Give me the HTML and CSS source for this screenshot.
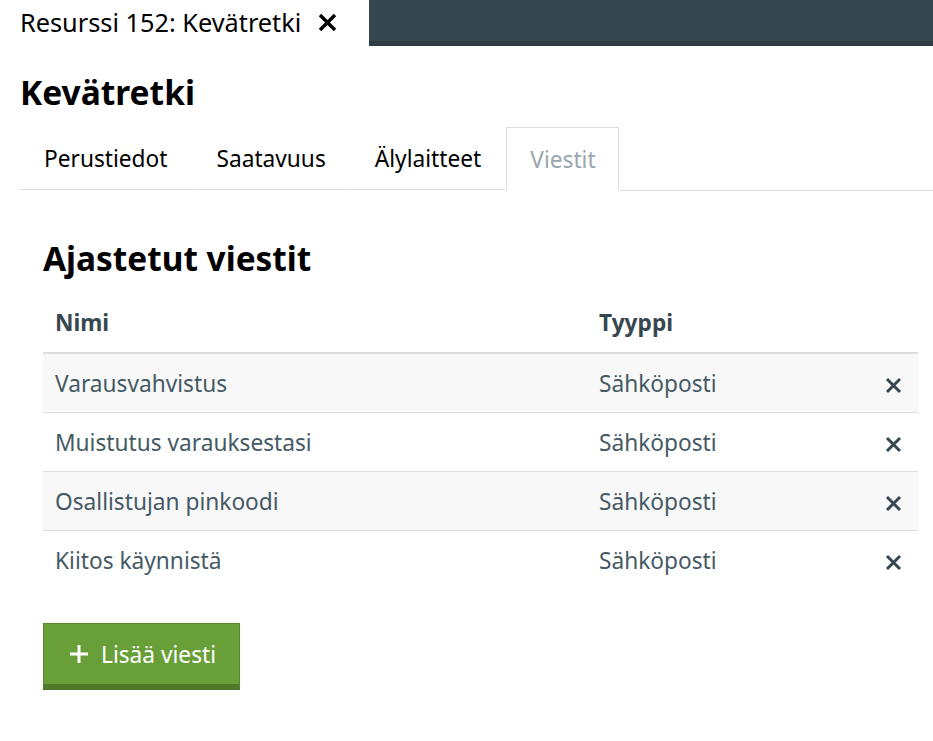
FILE: index.html
```html
<!DOCTYPE html>
<html lang="fi">
<head>
    <meta charset="UTF-8">
    <title>Resurssi 152: Kevätretki</title>
    <link rel="stylesheet" href="styles.css">
</head>
<body>
<header class="topbar">
    <div class="doc-tab">
        <span>Resurssi 152: Kevätretki</span>
        <svg class="doc-close" width="19" height="19" viewBox="0 0 19 19">
            <path d="M2 2 L17 17 M17 2 L2 17" stroke="#000" stroke-width="3.4"/>
        </svg>
    </div>
    <div class="topbar-fill"></div>
</header>
<main class="page">
    <h1 class="page-title">Kevätretki</h1>
    <ul class="tabs">
        <li class="tab">Perustiedot</li>
        <li class="tab">Saatavuus</li>
        <li class="tab">Älylaitteet</li>
        <li class="tab active">Viestit</li>
        <li class="tab-rest"></li>
    </ul>
    <section class="panel">
        <h2>Ajastetut viestit</h2>
        <table class="messages">
            <thead>
            <tr>
                <th class="col-name">Nimi</th>
                <th>Tyyppi</th>
                <th class="col-action"></th>
            </tr>
            </thead>
            <tbody>
            <tr>
                <td>Varausvahvistus</td>
                <td>Sähköposti</td>
                <td class="col-action"><svg class="remove" width="17" height="17" viewBox="0 0 17 17"><path d="M2 2 L15 15 M15 2 L2 15"/></svg></td>
            </tr>
            <tr>
                <td>Muistutus varauksestasi</td>
                <td>Sähköposti</td>
                <td class="col-action"><svg class="remove" width="17" height="17" viewBox="0 0 17 17"><path d="M2 2 L15 15 M15 2 L2 15"/></svg></td>
            </tr>
            <tr>
                <td>Osallistujan pinkoodi</td>
                <td>Sähköposti</td>
                <td class="col-action"><svg class="remove" width="17" height="17" viewBox="0 0 17 17"><path d="M2 2 L15 15 M15 2 L2 15"/></svg></td>
            </tr>
            <tr>
                <td>Kiitos käynnistä</td>
                <td>Sähköposti</td>
                <td class="col-action"><svg class="remove" width="17" height="17" viewBox="0 0 17 17"><path d="M2 2 L15 15 M15 2 L2 15"/></svg></td>
            </tr>
            </tbody>
        </table>
        <button class="add-btn">
            <svg class="plus" width="20" height="20" viewBox="0 0 20 20">
                <path d="M10 1 V19 M1 10 H19" stroke="#fff" stroke-width="3"/>
            </svg>
            Lisää viesti
        </button>
    </section>
</main>
</body>
</html>
```

FILE: styles.css
```css
/* General */
body {
    margin: 0;
    font-family: "Noto Sans", "Open Sans", sans-serif;
    color: #000;
    background: #fff;
}

/* Top document tab bar */
.topbar {
    display: flex;
    height: 46px;
}

.doc-tab {
    display: flex;
    align-items: center;
    gap: 17px;
    width: 369px;
    box-sizing: border-box;
    padding: 0 0 2px 20px;
    font-size: 25.3px;
}

.topbar-fill {
    flex: 1;
    background: #37474f;
    border-bottom: 5px solid #2f3c43;
}

/* Page */
.page {
    padding: 0 0 0 20px;
}

.page-title {
    margin: 28px 0 17px;
    font-size: 33.5px;
    font-weight: 700;
    line-height: 36px;
}

/* Tabs */
.tabs {
    display: flex;
    list-style: none;
    margin: 0;
    padding: 0;
}

.tab {
    padding: 0 24px;
    height: 62px;
    line-height: 64px;
    font-size: 22.7px;
    border-bottom: 1px solid #dedede;
    margin-right: 1px;
}

.tab.active {
    color: #9aa6ae;
    border: 1px solid #dedede;
    border-bottom: none;
    height: 63px;
    padding: 0 22px 0 23px;
}

.tab-rest {
    flex: 1;
    border-bottom: 1px solid #dedede;
}

/* Panel */
.panel {
    padding: 47px 15px 0 23px;
}

.panel h2 {
    margin: 0 0 14px;
    font-size: 33.4px;
    font-weight: 700;
    line-height: 40px;
}

.messages {
    width: 100%;
    border-collapse: collapse;
    font-size: 22.7px;
    color: #455a64;
}

.messages th {
    text-align: left;
    font-weight: 700;
    color: #37474f;
    height: 60px;
    padding: 0 12px;
    border-bottom: 2px solid #dddddd;
}

.messages td {
    height: 58px;
    padding: 0 12px;
    border-bottom: 1px solid #dddddd;
}

.messages tbody tr:nth-child(odd) {
    background: #f8f8f8;
}

.messages tbody tr:last-child td {
    border-bottom: none;
}

.col-name {
    width: 520px;
}

.col-action {
    width: 40px;
    text-align: right;
}

.remove {
    display: inline-block;
    vertical-align: middle;
    margin-right: 4px;
    stroke: #37474f;
    stroke-width: 3;
    cursor: pointer;
}

/* Add button */
.add-btn {
    margin-top: 34px;
    display: inline-flex;
    align-items: center;
    gap: 12px;
    height: 67px;
    padding: 0 23px 0 25px;
    font-family: inherit;
    font-size: 22.7px;
    color: #fff;
    background: #689f38;
    border: 1px solid #5a8a30;
    border-bottom: 6px solid #4e7a29;
    border-radius: 0;
    cursor: pointer;
}
```
